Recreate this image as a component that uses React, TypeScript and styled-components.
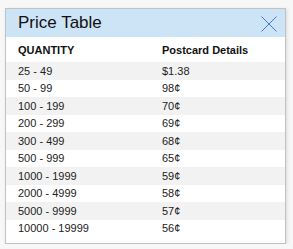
import React from "react";
import styled, { createGlobalStyle } from "styled-components";

const Global = createGlobalStyle`
  html, body { margin: 0; padding: 0; background: #f7f7f7; }
  body { font-family: Arial, "Liberation Sans", sans-serif; }
`;

const Page = styled.div`
  padding: 8px 0 0 5px;
`;

const Dialog = styled.div`
  width: 281px;
  box-sizing: border-box;
  border: 1px solid #c2c2c2;
  background: #fff;
  box-shadow: 1px 1px 3px rgba(0,0,0,0.12);
  padding-bottom: 6px;
`;

const Header = styled.div`
  height: 28px;
  background: #cde3f6;
  display: flex;
  align-items: center;
  justify-content: space-between;
  padding: 0 8px 0 12px;
`;

const Title = styled.div`
  font-size: 17px;
  color: #111;
  line-height: 28px;
`;

const Close = styled.button`
  border: 0;
  background: none;
  padding: 0;
  width: 16px;
  height: 16px;
  display: flex;
  margin-top: 1px;
`;

const Table = styled.div`
  display: flex;
  flex-direction: column;
  font-size: 11px;
  color: #222;
`;

const Row = styled.div<{ $shade?: boolean; $head?: boolean }>`
  display: grid;
  grid-template-columns: 144px 1fr;
  padding-left: 12px;
  height: ${(p) => (p.$head ? "24px" : "17.5px")};
  align-items: center;
  background: ${(p) => (p.$shade ? "#f2f2f2" : "#fff")};
  font-weight: ${(p) => (p.$head ? "bold" : "normal")};
  color: ${(p) => (p.$head ? "#111" : "#222")};
  padding-top: ${(p) => (p.$head ? "1px" : "0")};
`;

const rows: [string, string][] = [
  ["25 - 49", "$1.38"],
  ["50 - 99", "98¢"],
  ["100 - 199", "70¢"],
  ["200 - 299", "69¢"],
  ["300 - 499", "68¢"],
  ["500 - 999", "65¢"],
  ["1000 - 1999", "59¢"],
  ["2000 - 4999", "58¢"],
  ["5000 - 9999", "57¢"],
  ["10000 - 19999", "56¢"],
];

export default function App() {
  return (
    <>
      <Global />
      <Page>
        <Dialog>
          <Header>
            <Title>Price Table</Title>
            <Close aria-label="Close">
              <svg width="16" height="16" viewBox="0 0 16 16">
                <path d="M0.5 0.5 L15.5 15.5 M15.5 0.5 L0.5 15.5" stroke="#3b78d8" strokeWidth="1" fill="none" />
              </svg>
            </Close>
          </Header>
          <Table>
            <Row $head>
              <span>QUANTITY</span>
              <span>Postcard Details</span>
            </Row>
            {rows.map(([q, p], i) => (
              <Row key={q} $shade={i % 2 === 0}>
                <span>{q}</span>
                <span>{p}</span>
              </Row>
            ))}
          </Table>
        </Dialog>
      </Page>
    </>
  );
}
